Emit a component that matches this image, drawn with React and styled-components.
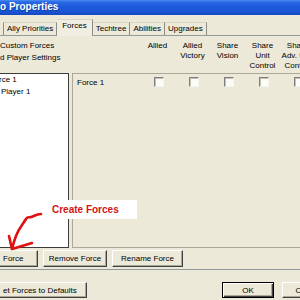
import React from 'react';
import styled, { createGlobalStyle, css } from 'styled-components';

const GlobalStyle = createGlobalStyle`
  html, body { margin: 0; padding: 0; background: #ECE9D8; }
  body { width: 300px; height: 300px; overflow: hidden; }
`;

const Window = styled.div`
  position: relative;
  box-sizing: border-box;
  width: 300px;
  height: 300px;
  overflow: hidden;
  display: flex;
  flex-direction: column;
  background: #ECE9D8;
  font-family: "Liberation Sans", Arial, sans-serif;
  font-size: 8px;
  color: #000;
`;

const TitleBar = styled.div`
  flex: none;
  height: 15px;
  line-height: 14px;
  font-size: 10px;
  font-weight: bold;
  color: #fff;
  white-space: nowrap;
  background: linear-gradient(180deg, #4C8DF6 0px, #2A69E4 2px, #1D5BDD 6px, #1A55D6 11px, #1648C2 15px);
  text-shadow: 1px 1px 0 rgba(0, 0, 0, 0.3);
`;

const TabStrip = styled.div`
  flex: none;
  display: flex;
  align-items: flex-end;
  height: 16px;
  margin-top: 4px;
  padding-left: 3px;
  border-bottom: 1px solid #919B9C;
`;

const Tab = styled.div`
  box-sizing: border-box;
  height: ${p => (p.$active ? 17 : 13)}px;
  margin-bottom: ${p => (p.$active ? -1 : 0)}px;
  padding: 0 ${p => (p.$active ? 5 : 3)}px;
  line-height: 12px;
  white-space: nowrap;
  background: ${p => (p.$active ? '#F0EEE3' : '#ECE9D8')};
  border-top: 1px solid #D8D5C8;
  border-right: 1px solid #8C8C84;
  ${p => p.$first && css`border-left: 1px solid #8C8C84;`}
`;

const TabPanel = styled.div`
  flex: none;
  display: flex;
  flex-direction: column;
  padding-bottom: 2px;
  border-bottom: 1px solid #919B9C;
`;

const ForcesGrid = styled.div`
  display: grid;
  grid-template-columns: 69px 1fr;
  grid-template-rows: 37px 175px;
  column-gap: 3px;
`;

const OptionList = styled.div`
  padding-top: 4px;
  line-height: 12px;
  white-space: nowrap;
`;

const ColumnHeader = styled.div`
  display: grid;
  grid-template-columns: 68px repeat(5, 35px);
  padding-top: 5px;
  line-height: 10px;
  text-align: center;
  white-space: nowrap;
`;

const ListBox = styled.div`
  margin-left: -2px;
  border: 1px solid #3C3C3C;
  background: #fff;
  line-height: 12px;
  white-space: nowrap;
`;

const TreeItem = styled.div`
  padding-left: ${p => p.$indent || 0}px;
`;

const ForceTable = styled.div`
  margin-right: -12px;
  border: 1px solid #ACA899;
  background: #ECE9D8;
`;

const ForceRow = styled.div`
  display: grid;
  grid-template-columns: 68px repeat(5, 35px);
  height: 16px;
  align-items: center;
`;

const ForceName = styled.div`
  padding-left: 4px;
  white-space: nowrap;
`;

const Check = styled.span`
  justify-self: center;
  box-sizing: border-box;
  width: 10px;
  height: 10px;
  background: #FBFBF8;
  border: 1px solid;
  border-color: #808080 #F4F3EE #F4F3EE #808080;
  box-shadow: inset 1px 1px 0 #C4C1B4;
`;

const ButtonRow = styled.div`
  display: flex;
  gap: 5px;
  margin-top: 2px;
`;

const Button = styled.button`
  flex: none;
  box-sizing: border-box;
  width: ${p => p.$w}px;
  height: ${p => p.$h || 17}px;
  padding: 0;
  margin: 0;
  font-family: inherit;
  font-size: 8px;
  color: #000;
  white-space: nowrap;
  text-align: center;
  background: #ECE9D8;
  border: 1px solid;
  border-color: #FFFFFF #404040 #404040 #FFFFFF;
  box-shadow: inset -1px -1px 0 #ACA899;
  ${p => p.$clipped && css`
    border-left: none;
    text-align: left;
    padding-left: 3px;
  `}
  ${p => p.$default && css`
    border: 1px solid #000;
    box-shadow: inset 1px 1px 0 #fff, inset -1px -1px 0 #404040, inset -2px -2px 0 #ACA899;
  `}
`;

const Footer = styled.div`
  flex: none;
  display: flex;
  align-items: center;
  padding-top: 12px;
`;

const DialogButtons = styled.div`
  display: flex;
  gap: 8px;
  margin-left: auto;
  margin-right: -34px;
`;

const Callout = styled.div`
  position: absolute;
  left: 46px;
  top: 200px;
  width: 91px;
  height: 19px;
  box-sizing: border-box;
  padding-left: 6px;
  background: #fff;
  color: #D01414;
  font-family: "Liberation Sans", Arial, sans-serif;
  font-size: 10px;
  font-weight: bold;
  line-height: 19px;
  white-space: nowrap;
`;

const ArrowSvg = styled.svg`
  position: absolute;
  left: 0;
  top: 195px;
  overflow: visible;
`;

const headers = [
  ['Allied'],
  ['Allied', 'Victory'],
  ['Share', 'Vision'],
  ['Share', 'Unit', 'Control'],
  ['Share', 'Adv. Unit', 'Control'],
];

export default function App() {
  return (
    <>
      <GlobalStyle />
      <Window>
        <TitleBar>o Properties</TitleBar>
        <TabStrip>
          <Tab $first>Ally Priorities</Tab>
          <Tab $active>Forces</Tab>
          <Tab>Techtree</Tab>
          <Tab>Abilities</Tab>
          <Tab>Upgrades</Tab>
        </TabStrip>
        <TabPanel>
          <ForcesGrid>
            <OptionList>
              <div>Custom Forces</div>
              <div>d Player Settings</div>
            </OptionList>
            <ColumnHeader>
              <span />
              {headers.map((lines, i) => (
                <div key={i}>
                  {lines.map((l, j) => (
                    <div key={j}>{l}</div>
                  ))}
                </div>
              ))}
            </ColumnHeader>
            <ListBox>
              <TreeItem>rce 1</TreeItem>
              <TreeItem $indent={2}>Player 1</TreeItem>
            </ListBox>
            <ForceTable>
              <ForceRow>
                <ForceName>Force 1</ForceName>
                {headers.map((_, i) => (
                  <Check key={i} />
                ))}
              </ForceRow>
            </ForceTable>
          </ForcesGrid>
          <ButtonRow>
            <Button $w={38} $clipped>Force</Button>
            <Button $w={64}>Remove Force</Button>
            <Button $w={71}>Rename Force</Button>
          </ButtonRow>
        </TabPanel>
        <Footer>
          <Button $w={87} $h={16} $clipped>et Forces to Defaults</Button>
          <DialogButtons>
            <Button $w={52} $h={16} $default>OK</Button>
            <Button $w={52} $h={16}>Cancel</Button>
          </DialogButtons>
        </Footer>
        <Callout>Create Forces</Callout>
        <ArrowSvg width="50" height="65" viewBox="0 0 50 65">
          <path
            d="M41 19 C37 19 34 21 31 22 C29 23 28 21 26 24 C23 29 19 33 16 41 C14 46 13 50 12 54"
            fill="none"
            stroke="#E01010"
            strokeWidth="2.6"
            strokeLinecap="round"
            strokeLinejoin="round"
          />
          <path
            d="M9 41 L12 54 L32 48"
            fill="none"
            stroke="#E01010"
            strokeWidth="2.6"
            strokeLinecap="round"
            strokeLinejoin="round"
          />
        </ArrowSvg>
      </Window>
    </>
  );
}
